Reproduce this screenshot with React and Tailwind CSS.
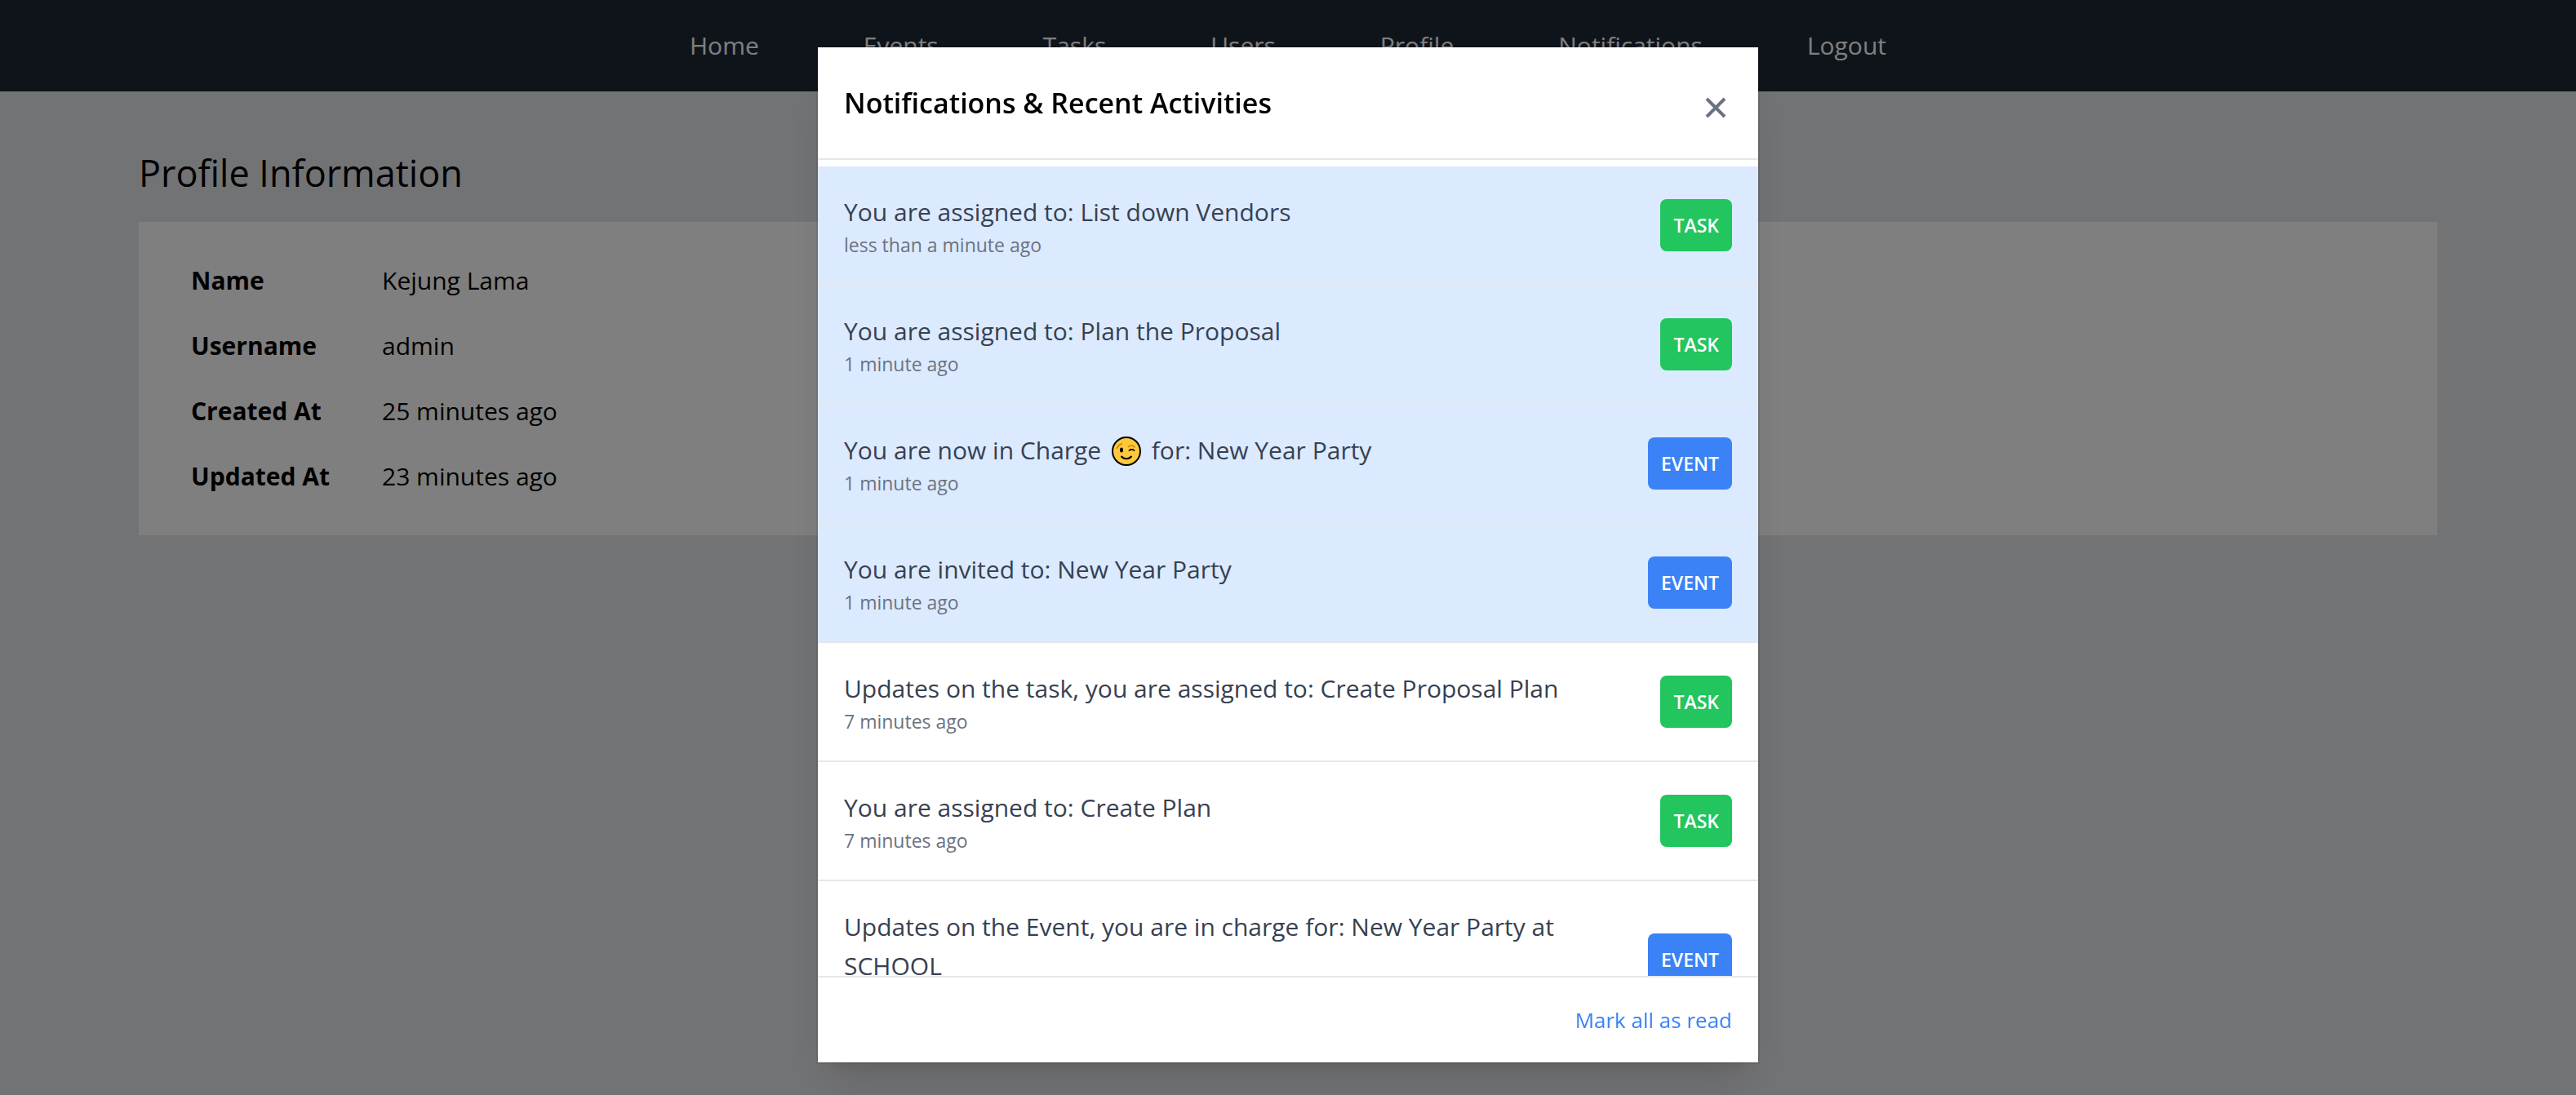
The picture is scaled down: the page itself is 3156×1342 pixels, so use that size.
const navLinks = ["Home", "Events", "Tasks", "Users", "Profile", "Notifications", "Logout"];

const profile = [
  ["Name", "Kejung Lama"],
  ["Username", "admin"],
  ["Created At", "25 minutes ago"],
  ["Updated At", "23 minutes ago"],
];

const notifications = [
  { text: "You are assigned to: List down Vendors", time: "less than a minute ago", type: "TASK", unread: true },
  { text: "You are assigned to: Plan the Proposal", time: "1 minute ago", type: "TASK", unread: true },
  { text: "You are now in Charge ", wink: true, after: " for: New Year Party", time: "1 minute ago", type: "EVENT", unread: true },
  { text: "You are invited to: New Year Party", time: "1 minute ago", type: "EVENT", unread: true },
  { text: "Updates on the task, you are assigned to: Create Proposal Plan", time: "7 minutes ago", type: "TASK" },
  { text: "You are assigned to: Create Plan", time: "7 minutes ago", type: "TASK" },
  { text: "Updates on the Event, you are in charge for: New Year Party at SCHOOL", time: "8 minutes ago", type: "EVENT" },
];

function Wink() {
  return (
    <svg viewBox="0 0 36 36" role="img" aria-label="winking face" className="mx-[5px] inline-block size-9 align-[-8px]">
      <circle cx="18" cy="18" r="17" fill="#ffc83d" stroke="#000" strokeWidth="2" />
      <path d="M6.5 14.5c1-3 3-5 6-5.5" fill="none" stroke="#d68a10" strokeWidth="1.8" strokeLinecap="round" />
      <path d="M20.5 12.5c2-1.8 5.500-1.800 7.500 0.300" fill="none" stroke="#d68a10" strokeWidth="1.8" strokeLinecap="round" />
      <ellipse cx="12" cy="16.5" rx="2" ry="3" fill="#000" />
      <path d="M21.5 17c1.5-1.6 4.5-1.6 6 0" fill="none" stroke="#000" strokeWidth="1.8" strokeLinecap="round" />
      <path d="M12 24.5c3 3.6 9 3.6 12 0" fill="none" stroke="#000" strokeWidth="2" strokeLinecap="round" />
    </svg>
  );
}

function Row({ item }) {
  return (
    <li
      className={
        "flex items-center justify-between gap-8 border-b-2 border-[#e5e7eb] p-8 " +
        (item.unread ? "bg-[#dbeafe]" : "bg-white")
      }
    >
      <div>
        <p className="text-[30px] leading-[48px] text-[#374151]">
          {item.text}
          {item.wink && <Wink />}
          {item.after}
        </p>
        <p className="text-[23px] leading-8 text-[#6b7280]">{item.time}</p>
      </div>
      <span
        className={
          "rounded-lg p-4 text-[23px] leading-8 font-semibold text-white " +
          (item.type === "TASK" ? "bg-[#22c55e]" : "bg-[#3b82f6]")
        }
      >
        {item.type}
      </span>
    </li>
  );
}

export default function App() {
  return (
    <div className="min-h-screen bg-[#e5e7eb] font-['Open_Sans','Noto_Sans',sans-serif] text-black">
      <nav className="flex justify-center gap-32 bg-[#1f2937] py-8 text-[30px] leading-[48px] text-white">
        {navLinks.map((label) => (
          <a key={label} href="#">{label}</a>
        ))}
      </nav>

      <main className="mx-auto max-w-[3072px] px-32 pt-17">
        <h1 className="mb-7 text-[45px] leading-[64px]">Profile Information</h1>
        <section className="bg-white p-8">
          <table className="text-left text-[30px] leading-[48px]">
            <tbody>
              {profile.map(([label, value]) => (
                <tr key={label}>
                  <th scope="row" className="px-8 py-4 font-bold">{label}</th>
                  <td className="px-8 py-4">{value}</td>
                </tr>
              ))}
            </tbody>
          </table>
        </section>
      </main>

      <div className="fixed inset-0 flex justify-center bg-black/50 pt-[58px] pb-10">
        <div
          role="dialog"
          aria-modal="true"
          aria-labelledby="dialog-title"
          className="flex w-full max-w-6xl flex-col bg-white shadow-[0_0_0_2px_rgba(0,0,0,0.08),0_40px_50px_-10px_rgba(0,0,0,0.1),0_16px_20px_-12px_rgba(0,0,0,0.1)]"
        >
          <header className="flex items-center justify-between border-b-2 border-[#e5e7eb] p-8">
            <h2 id="dialog-title" className="text-[34px] leading-[72px] font-semibold">
              Notifications &amp; Recent Activities
            </h2>
            <button type="button" aria-label="Close" className="pt-3 text-[#6b7280]">
              <svg viewBox="0 0 40 40" className="size-10" fill="none" stroke="currentColor" strokeWidth="4">
                <path d="M9 9l22 22M31 9L9 31" />
              </svg>
            </button>
          </header>
          <ul className="mt-2 min-h-0 flex-1 overflow-y-auto [scrollbar-width:none]">
            {notifications.map((item) => (
              <Row key={item.text} item={item} />
            ))}
          </ul>
          <footer className="flex justify-end border-t-2 border-[#e5e7eb] p-8">
            <button type="button" className="text-[26px] leading-10 text-[#3b82f6]">Mark all as read</button>
          </footer>
        </div>
      </div>
    </div>
  );
}
